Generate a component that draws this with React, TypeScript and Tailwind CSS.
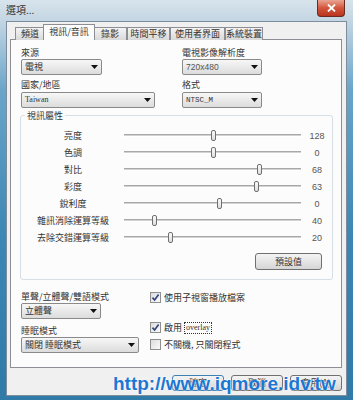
import React from "react";

type SliderRow = { label: string; value: string; pos: number };

const sliders: SliderRow[] = [
  { label: "亮度", value: "128", pos: 89 },
  { label: "色調", value: "0", pos: 89 },
  { label: "對比", value: "68", pos: 135 },
  { label: "彩度", value: "63", pos: 132 },
  { label: "銳利度", value: "0", pos: 95 },
  { label: "雜訊消除運算等級", value: "40", pos: 30 },
  { label: "去除交錯運算等級", value: "20", pos: 46 },
];

const tabs = [
  { name: "頻道", w: "w-[30px]" },
  { name: "視訊/音訊", w: "w-[52px]", active: true },
  { name: "錄影", w: "w-[34px]" },
  { name: "時間平移", w: "w-[43px]" },
  { name: "使用者界面", w: "w-[55px]" },
  { name: "系統裝置", w: "w-[38px]" },
];

function Arrow() {
  return (
    <svg width="7" height="4" viewBox="0 0 7 4">
      <path d="M0 0h7L3.5 4z" fill="#111" />
    </svg>
  );
}

function Combo({ text, w, font }: { text: string; w: string; font?: string }) {
  return (
    <div
      className={`${w} h-[16px] flex items-center justify-between pl-[3px] pr-[3px] border border-[#8a8a8a] rounded-[2px] bg-gradient-to-b from-[#f7f7f7] to-[#dcdcdc]`}
    >
      <span className={font ?? "text-[9px] leading-[12px]"}>{text}</span>
      <Arrow />
    </div>
  );
}

function Slider({ label, value, pos }: SliderRow) {
  return (
    <div className="h-[17px] flex items-center">
      <div className="w-[84px] ml-[10px] text-center text-[9px] leading-[12px]">{label}</div>
      <div className="relative ml-[9px] w-[177px] h-[11px] flex items-center">
        <div className="w-full h-[3px] bg-[#d2d2d2] border-t border-[#a8a8a8] border-b border-b-white" />
        <div
          className="absolute top-0 w-[5px] h-[11px] rounded-[2px] border border-[#6f6f6f] bg-gradient-to-b from-[#fbfbfb] to-[#dedede]"
          style={{ left: pos - 2 }}
        />
      </div>
      <div className="w-[24px] ml-[4px] text-center text-[9px] leading-[12px] text-[#555] font-['Liberation_Sans',sans-serif]">
        {value}
      </div>
    </div>
  );
}

function Check({ checked, children }: { checked?: boolean; children: React.ReactNode }) {
  return (
    <div className="h-[13px] flex items-center">
      <div className="w-[11px] h-[11px] border border-[#8f8f8f] bg-gradient-to-br from-[#dcdcdc] to-[#fbfbfb] flex items-center justify-center">
        {checked && (
          <svg width="9" height="9" viewBox="0 0 9 9">
            <path d="M1.5 4.6 L3.6 7 L7.6 1.6" stroke="#2b3f7a" strokeWidth="1.6" fill="none" />
          </svg>
        )}
      </div>
      <div className="ml-[3px] text-[9px] leading-[12px] flex items-center">{children}</div>
    </div>
  );
}

function Button({ text, primary }: { text: string; primary?: boolean }) {
  return (
    <div
      className={`w-[52px] h-[16px] flex items-center justify-center rounded-[3px] border text-[9px] leading-[12px] bg-gradient-to-b from-[#f4f4f4] to-[#d6d6d6] ${
        primary ? "border-[#3c7fb1]" : "border-[#707070]"
      }`}
    >
      {text}
    </div>
  );
}

export default function App() {
  return (
    <div className="relative w-[353px] h-[400px] overflow-hidden text-[#333] font-['Noto_Sans_CJK_TC',sans-serif] bg-[linear-gradient(180deg,#d8e4ec_0px,#c3d5e3_21px,#6aa5c9_90px,#3b86b3_60%,#2f7aa6_100%)]">
      {/* title bar */}
      <div className="h-[21px] flex items-start justify-between">
        <div className="pl-[6px] pt-[3px] text-[10px] leading-[13px]">選項...</div>
        <div className="mr-[8px] w-[28px] h-[17px] rounded-b-[4px] border border-t-0 border-[#6b2a22] bg-gradient-to-b from-[#e9a493] via-[#d2553c] to-[#b8341f] flex items-center justify-center">
          <svg width="9" height="8" viewBox="0 0 9 8">
            <path d="M1 0.5 L8 7.5 M8 0.5 L1 7.5" stroke="#fff" strokeWidth="1.8" />
          </svg>
        </div>
      </div>

      {/* client area */}
      <div className="mx-[6px] h-[375px] bg-[#f0f0f0] border border-[#7d8d9c] pt-[2px] pl-[3px]">
        <div className="flex items-end h-[16px] pl-[5px]">
          {tabs.map((t) =>
            t.active ? (
              <div
                key={t.name}
                className={`${t.w} -mx-[2px] relative z-10 h-[16px] bg-[#fcfcfc] border border-b-0 border-[#8c8e94] text-[9px] leading-[14px] text-center`}
              >
                {t.name}
              </div>
            ) : (
              <div
                key={t.name}
                className={`${t.w} h-[13px] bg-gradient-to-b from-[#f4f4f4] to-[#d9d9d9] border border-b-0 border-[#8c8e94] text-[9px] leading-[12px] text-center`}
              >
                {t.name}
              </div>
            )
          )}
        </div>

        {/* tab page */}
        <div className="-mt-px w-[332px] h-[329px] bg-[#fcfcfc] border border-[#8c8e94] pt-[6px]">
          <div className="flex pl-[10px]">
            <div className="w-[161px]">
              <div className="h-[13px] text-[9px] leading-[13px]">來源</div>
              <Combo text="電視" w="w-[81px]" />
              <div className="mt-[3px] h-[13px] text-[9px] leading-[13px]">國家/地區</div>
              <div className="mt-[1px]">
                <Combo text="Taiwan" w="w-[134px]" font="text-[8px] leading-[12px] font-['Liberation_Serif',serif]" />
              </div>
            </div>
            <div>
              <div className="h-[13px] text-[9px] leading-[13px]">電視影像解析度</div>
              <Combo text="720x480" w="w-[80px]" font="text-[8.5px] leading-[12px] text-[#555] font-['Liberation_Sans',sans-serif]" />
              <div className="mt-[3px] h-[13px] text-[9px] leading-[13px]">格式</div>
              <div className="mt-[1px]">
                <Combo text="NTSC_M" w="w-[80px]" font="text-[7.5px] leading-[12px] font-['Liberation_Mono',monospace]" />
              </div>
            </div>
          </div>

          <fieldset className="mt-[2px] ml-[9px] w-[313px] border border-[#d5dfe5] rounded-[3px] pt-[6px] pb-[9px]">
            <legend className="ml-[4px] px-[2px] text-[9px] leading-[11px]">視訊屬性</legend>
            {sliders.map((s) => (
              <Slider key={s.label} {...s} />
            ))}
            <div className="mt-[7px] flex justify-end pr-[10px]">
              <div className="w-[67px] h-[17px] flex items-center justify-center rounded-[3px] border border-[#707070] bg-gradient-to-b from-[#f4f4f4] to-[#d6d6d6] text-[9px] leading-[12px]">
                預設值
              </div>
            </div>
          </fieldset>

          <div className="flex pl-[10px] mt-[11px]">
            <div className="w-[129px]">
              <div className="h-[12px] text-[9px] leading-[12px]">單聲/立體聲/雙語模式</div>
              <Combo text="立體聲" w="w-[80px]" />
              <div className="mt-[6px] h-[12px] text-[9px] leading-[12px]">睡眠模式</div>
              <Combo text="關閉 睡眠模式" w="w-[118px]" />
            </div>
            <div>
              <Check checked>使用子視窗播放檔案</Check>
              <div className="mt-[17px]">
                <Check checked>
                  啟用
                  <span className="ml-[2px] px-[1px] border border-dotted border-[#333] text-[8px] leading-[10px] font-['Liberation_Serif',serif]">
                    overlay
                  </span>
                </Check>
              </div>
              <div className="mt-[4px]">
                <Check>不關機, 只關閉程式</Check>
              </div>
            </div>
          </div>
        </div>

        {/* footer */}
        <div className="mt-[7px] flex justify-end gap-[7px] pr-[4px]">
          <Button text="確定" primary />
          <Button text="取消" />
          <Button text="套用(A)" />
        </div>
      </div>

      {/* watermark */}
      <div className="absolute left-[113px] top-[374px] text-[19px] leading-none font-bold text-[#1c77d2] font-['Liberation_Sans',Arial,sans-serif] [text-shadow:0_0_2px_#ffffff,0_0_1px_#ffffff]">
        http://www.iqmore.idv.tw
      </div>
    </div>
  );
}
